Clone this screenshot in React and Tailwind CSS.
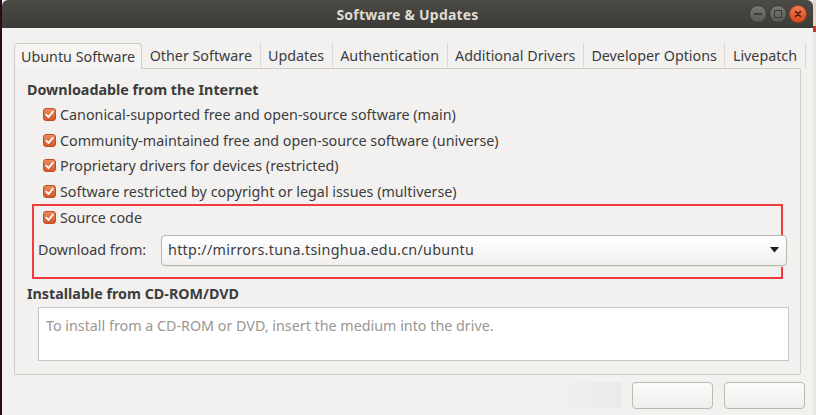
import React from 'react';

const font = { fontFamily: '"Noto Sans", "Open Sans", sans-serif' };

const tabs = [
  'Ubuntu Software',
  'Other Software',
  'Updates',
  'Authentication',
  'Additional Drivers',
  'Developer Options',
  'Livepatch',
];

const sources = [
  'Canonical-supported free and open-source software (main)',
  'Community-maintained free and open-source software (universe)',
  'Proprietary drivers for devices (restricted)',
  'Software restricted by copyright or legal issues (multiverse)',
];

const Check = () => (
  <span className="w-[13px] h-[13px] rounded-[3px] bg-gradient-to-b from-[#ec8a5c] to-[#d4582a] border border-[#b9501f] flex items-center justify-center shrink-0">
    <svg width="9" height="9" viewBox="0 0 9 9">
      <path d="M1.2 4.6 L3.6 7 L7.8 1.8" fill="none" stroke="#fff" strokeWidth="1.8" strokeLinecap="round" strokeLinejoin="round" />
    </svg>
  </span>
);

const CheckRow = ({ label }) => (
  <div className="flex items-center gap-[4px] h-[25.5px]">
    <Check />
    <span className="text-[14.3px] text-[#3c3c3c] whitespace-nowrap">{label}</span>
  </div>
);

const WinButton = ({ children, close }) => (
  <div
    className={`w-[18px] h-[18px] rounded-full flex items-center justify-center border ${
      close
        ? 'bg-gradient-to-b from-[#f27a4f] to-[#d9481d] border-[#a8401c]'
        : 'bg-gradient-to-b from-[#77766f] to-[#5a5954] border-[#3a3935]'
    }`}
  >
    {children}
  </div>
);

export default function App() {
  return (
    <div className="w-[816px] h-[415px] flex overflow-hidden bg-[#2c0a1e]" style={font}>
      {/* left desktop edge */}
      <div className="w-[2px] bg-[#2c0a1e]" />

      {/* window */}
      <div className="w-[811px] flex flex-col bg-[#f2f1f0]">
        {/* title bar */}
        <div className="h-[28px] shrink-0 relative flex items-center justify-center bg-gradient-to-b from-[#4b4a45] to-[#3c3b37] rounded-t-[6px]">
          <span className="text-[14px] font-bold text-[#dfdbd2] tracking-[0.2px]">Software &amp; Updates</span>
          <div className="absolute right-[6px] top-[5px] flex gap-[2px]">
            <WinButton>
              <span className="w-[8px] h-[2px] bg-[#3b3a36]" />
            </WinButton>
            <WinButton>
              <span className="w-[8px] h-[8px] border-[1.5px] border-[#3b3a36]" />
            </WinButton>
            <WinButton close>
              <svg width="8" height="8" viewBox="0 0 8 8">
                <path d="M1.5 1.5 L6.5 6.5 M6.5 1.5 L1.5 6.5" stroke="#4a1b0c" strokeWidth="1.5" strokeLinecap="round" />
              </svg>
            </WinButton>
          </div>
        </div>

        {/* body */}
        <div className="flex-1 flex flex-col pl-[12px] pr-[11px] pt-[14px]">
          {/* tabs */}
          <div className="flex h-[26px] items-end">
            {tabs.map((t, i) =>
              i === 0 ? (
                <div
                  key={t}
                  className="h-[26px] px-[6px] shrink-0 whitespace-nowrap flex items-center border border-b-0 border-[#cfcbc6] rounded-t-[4px] bg-[#f5f4f3] text-[14.3px] text-[#3c3c3c] relative top-[1px]"
                >
                  {t}
                </div>
              ) : (
                <div
                  key={t}
                  className="h-[25px] px-[7.5px] shrink-0 whitespace-nowrap flex items-center border-r border-[#dcd9d5] text-[14.3px] text-[#3c3c3c]"
                >
                  {t}
                </div>
              )
            )}
          </div>

          {/* panel */}
          <div className="w-[787px] h-[307px] border border-[#cfcbc6] rounded-[2px] flex flex-col pl-[12px] pr-[11px] pt-[10px]">
            <div className="text-[14.3px] font-bold text-[#3c3c3c] h-[22px] flex items-center">Downloadable from the Internet</div>
            <div className="pl-[16px] flex flex-col pt-[1px]">
              {sources.map((s) => (
                <CheckRow key={s} label={s} />
              ))}
            </div>

            {/* highlighted area */}
            <div className="ml-[5px] w-[751px] h-[75px] border-2 border-[#f03c3c] flex flex-col pl-[4px]">
              <div className="pl-[5px] -mt-[1px]">
                <CheckRow label="Source code" />
              </div>
              <div className="flex items-center mt-[4px]">
                <span className="text-[14.3px] text-[#3c3c3c] w-[123px] shrink-0">Download from:</span>
                <div className="w-[626px] shrink-0 h-[31px] rounded-[4px] border border-[#b8b4ae] bg-gradient-to-b from-[#ffffff] to-[#f1f0ef] flex items-center pl-[6px] pr-[7px] shadow-[0_1px_0_#e8e6e3]">
                  <span className="flex-1 text-[14.3px] text-[#3c3c3c] tracking-[0.3px]">http://mirrors.tuna.tsinghua.edu.cn/ubuntu</span>
                  <svg width="9" height="6" viewBox="0 0 9 6">
                    <path d="M0 0 L9 0 L4.5 5.5 Z" fill="#1e1e1e" />
                  </svg>
                </div>
              </div>
            </div>

            <div className="text-[14.3px] font-bold text-[#3c3c3c] h-[22px] flex items-center mt-[4px]">Installable from CD-ROM/DVD</div>
            <div className="ml-[11px] w-[751px] h-[54px] mt-[2px] bg-white border border-[#c9c6c1] px-[7px] pt-[5px]">
              <span className="text-[14.3px] text-[#9a9691]">To install from a CD-ROM or DVD, insert the medium into the drive.</span>
            </div>
          </div>

          {/* bottom buttons */}
          <div className="flex justify-end gap-[11px] mt-[7px] mr-[-3px]">
            <div className="w-[76px] h-[26px] bg-gradient-to-r from-[#f2f1f0] to-[#ebeae8]" />
            <div className="w-[81px] h-[27px] rounded-[4px] border border-[#bcb8b2] bg-gradient-to-b from-[#fbfbfa] to-[#efeeec]" />
            <div className="w-[81px] h-[27px] rounded-[4px] border border-[#bcb8b2] bg-gradient-to-b from-[#fbfbfa] to-[#efeeec]" />
          </div>
        </div>
      </div>

      {/* right desktop edge */}
      <div className="flex-1 flex flex-col bg-[#e9e7e4]">
        <div className="h-[26px] bg-[#e3d6c8]" />
        <div className="h-[6px] bg-[#c9372c]" />
      </div>
    </div>
  );
}
